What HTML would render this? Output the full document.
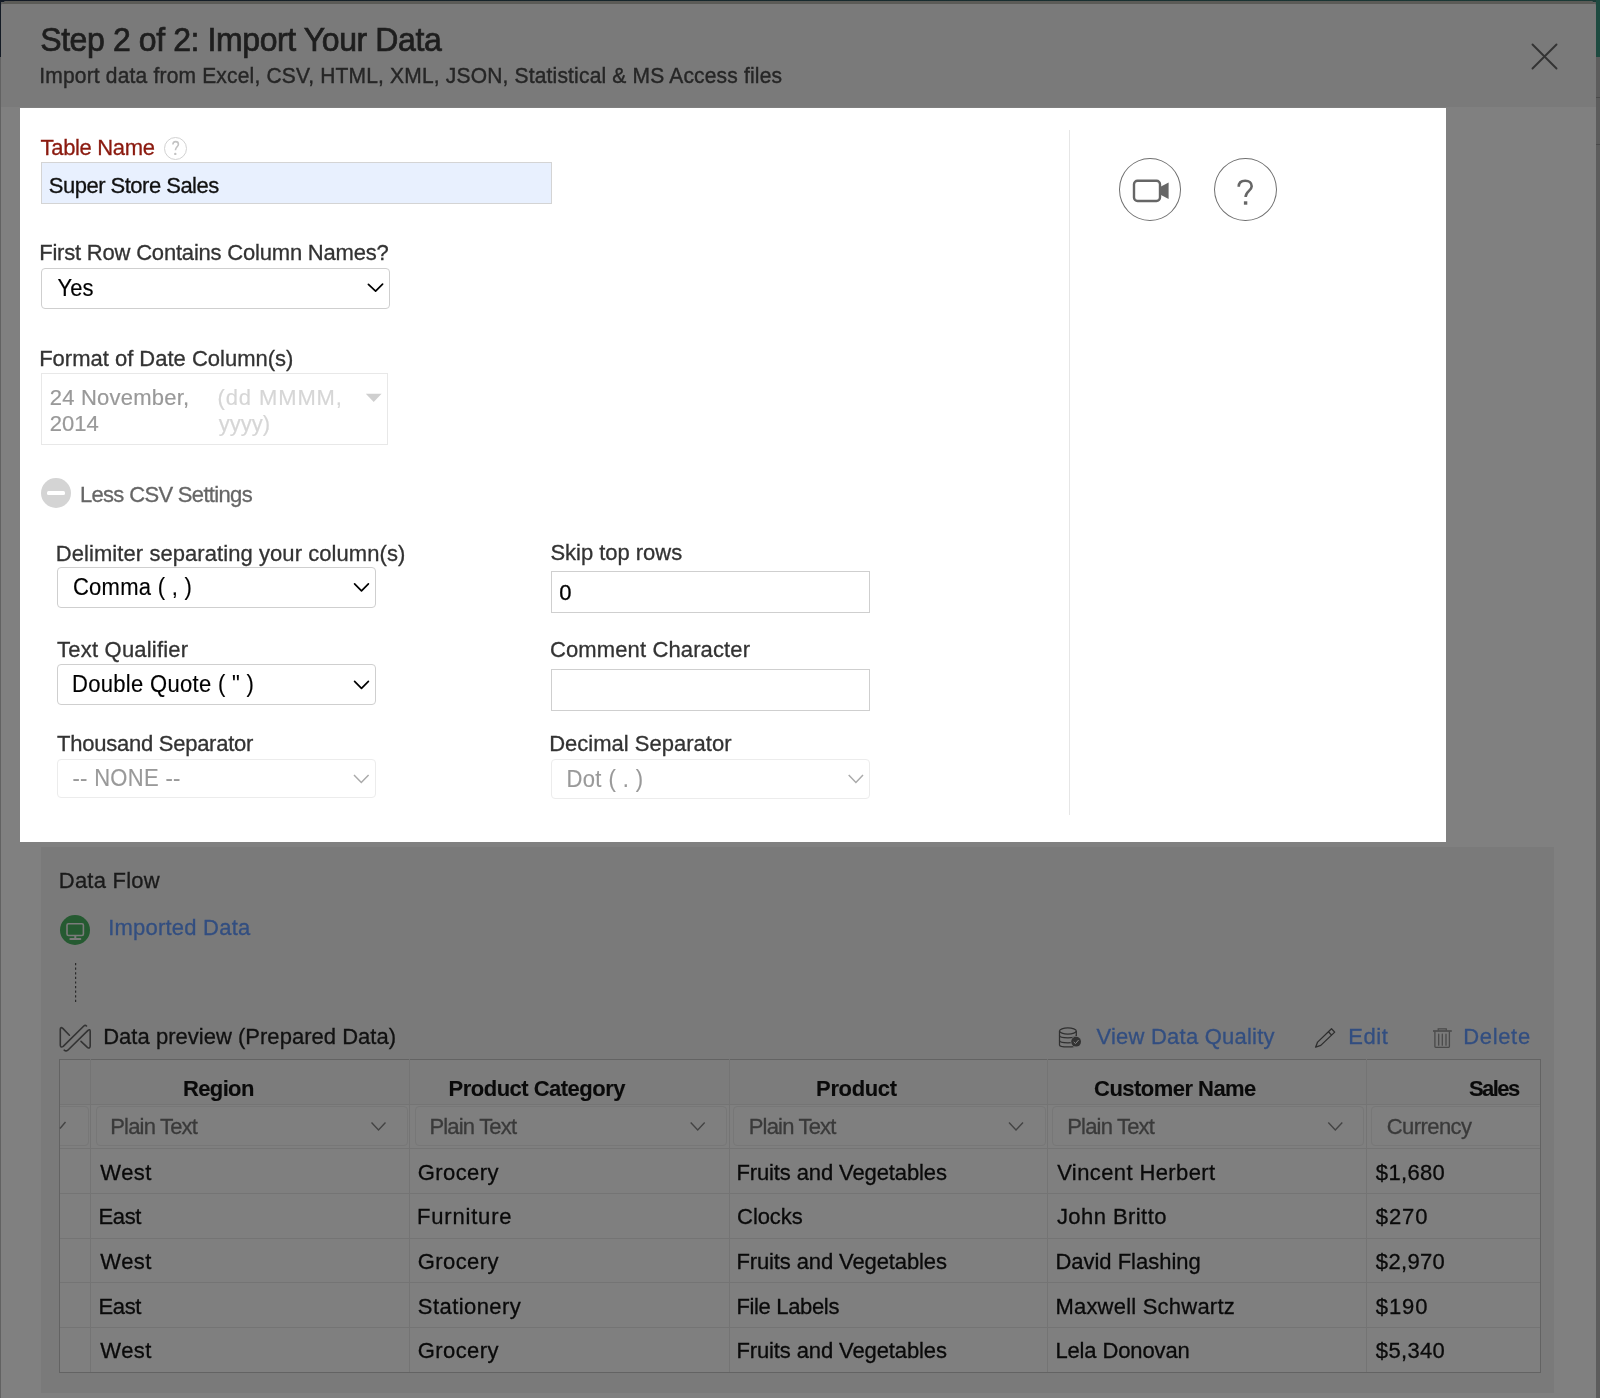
<!DOCTYPE html>
<html><head><meta charset="utf-8">
<style>
html,body{margin:0;padding:0;}
body{width:1600px;height:1398px;overflow:hidden;position:relative;background:#5c5c5c;font-family:"Liberation Sans",sans-serif;}
.a{position:absolute;box-sizing:border-box;}
.t{position:absolute;white-space:pre;line-height:1;font-family:"Liberation Sans",sans-serif;z-index:10;transform-origin:0 0.8465em;}
#txt{position:absolute;left:0;top:0;width:1600px;height:1398px;z-index:10;will-change:transform;}
svg{position:absolute;overflow:visible;}
</style></head><body>
<!-- app background bits -->
<div class="a" style="left:0;top:0;width:1600px;height:2px;background:linear-gradient(90deg,#141b25,#182a2e 50%,#1c3b37)"></div>
<div class="a" style="left:0;top:0;width:1px;height:57px;background:#141b25"></div>
<div class="a" style="left:0;top:57px;width:1px;height:1341px;background:#626262"></div>
<div class="a" style="left:1596px;top:0;width:4px;height:57px;background:#1d4a40"></div>
<div class="a" style="left:1596px;top:97px;width:4px;height:1px;background:#4a4a4a"></div>
<div class="a" style="left:1596px;top:144px;width:4px;height:1px;background:#4a4a4a"></div>

<!-- modal -->
<div class="a" style="left:1px;top:1px;width:1595px;height:1397px;background:#808080;border-radius:6px 6px 0 0;overflow:hidden">
  <div class="a" style="left:0;top:0;width:1595px;height:2.5px;background:#5b5b57"></div>
  <div class="a" style="left:0;top:2.5px;width:1595px;height:103px;background:#7a7a7a"></div>
</div>
<!-- close X -->
<svg style="left:0;top:0" width="1600" height="1398"><path d="M1532.5 44.5 L1556.5 68.5 M1556.5 44.5 L1532.5 68.5" stroke="#333" stroke-width="1.9" stroke-linecap="round" fill="none"/></svg>

<!-- white panel -->
<div class="a" style="left:20px;top:108px;width:1426px;height:734px;background:#fff"></div>
<!-- help circle -->
<div class="a" style="left:163.8px;top:137px;width:23px;height:23px;border:1.5px solid #d2d2d2;border-radius:50%"></div>
<!-- table name input -->
<div class="a" style="left:40.5px;top:162px;width:511.5px;height:42px;background:#e8f0fe;border:1px solid #d4d4d4"></div>
<!-- select yes -->
<div class="a" style="left:40.5px;top:267.6px;width:349.5px;height:41.2px;border:1px solid #cfcfcf;border-radius:4px"></div>
<svg style="left:0;top:0" width="1" height="1"><path d="M368.4 284.3 L375.6 291.2 L382.6 284.2" stroke="#000" stroke-width="1.7" stroke-linecap="round" stroke-linejoin="round" fill="none"/></svg>
<!-- date box -->
<div class="a" style="left:40.5px;top:373px;width:347.5px;height:72px;border:1px solid #e8e8e8"></div>
<svg style="left:0;top:0" width="1" height="1"><path d="M365.8 393.7 L381.6 393.7 L373.7 402 Z" fill="#cfcfcf"/></svg>
<!-- less csv -->
<div class="a" style="left:41px;top:478px;width:30px;height:30px;border-radius:50%;background:#d4d4d4"></div>
<div class="a" style="left:47.2px;top:490.5px;width:17.6px;height:4.8px;background:#fff;border-radius:1.5px"></div>
<!-- selects -->
<div class="a" style="left:57px;top:567.2px;width:319px;height:40.4px;border:1px solid #cfcfcf;border-radius:4px"></div>
<svg style="left:0;top:0" width="1" height="1"><path d="M354.6 583.8 L361.5 590.8 L368.4 583.8" stroke="#000" stroke-width="1.7" stroke-linecap="round" stroke-linejoin="round" fill="none"/></svg>
<div class="a" style="left:57px;top:664.3px;width:319px;height:40.4px;border:1px solid #cfcfcf;border-radius:4px"></div>
<svg style="left:0;top:0" width="1" height="1"><path d="M354.6 681.3 L361.5 688.3 L368.4 681.3" stroke="#000" stroke-width="1.7" stroke-linecap="round" stroke-linejoin="round" fill="none"/></svg>
<div class="a" style="left:57px;top:758.7px;width:318.7px;height:39.8px;border:1px solid #ececec;border-radius:4px"></div>
<svg style="left:0;top:0" width="1" height="1"><path d="M354 775 L361.3 782.5 L368.6 775" stroke="#aaa" stroke-width="1.5" fill="none"/></svg>
<div class="a" style="left:551px;top:571px;width:318.5px;height:41.6px;border:1px solid #cfcfcf"></div>
<div class="a" style="left:551px;top:669.3px;width:318.5px;height:41.4px;border:1px solid #cfcfcf"></div>
<div class="a" style="left:551px;top:758.5px;width:318.5px;height:40.2px;border:1px solid #ececec;border-radius:4px"></div>
<svg style="left:0;top:0" width="1" height="1"><path d="M848.7 775 L855.9 782.5 L863 775" stroke="#aaa" stroke-width="1.5" fill="none"/></svg>
<!-- divider -->
<div class="a" style="left:1069px;top:130px;width:1px;height:685px;background:#e6e6e6"></div>
<!-- circles -->
<div class="a" style="left:1118.8px;top:158.4px;width:62.6px;height:63px;border:1px solid #707070;border-radius:50%"></div>
<div class="a" style="left:1214.4px;top:158.4px;width:62.6px;height:63px;border:1px solid #707070;border-radius:50%"></div>
<svg style="left:0;top:0" width="1" height="1"><rect x="1134" y="180.8" width="26" height="20.2" rx="3.5" stroke="#666" stroke-width="2.4" fill="none"/><path d="M1161 186.5 L1168.6 182.5 L1168.6 199 L1161 195 Z" fill="#666"/></svg>

<!-- data flow box -->
<div class="a" style="left:41px;top:847px;width:1513px;height:546px;background:#7a7a7a"></div>
<div class="a" style="left:60.2px;top:914.9px;width:30.1px;height:30.1px;border-radius:50%;background:#255a31"></div>
<svg style="left:0;top:0" width="1" height="1"><rect x="67" y="923.7" width="16.4" height="11.8" rx="1.5" stroke="#7b7b7b" stroke-width="1.6" fill="none"/><rect x="74.3" y="935.5" width="2" height="3" fill="#7b7b7b"/><rect x="69.3" y="938" width="12" height="2.1" rx="1" fill="#7b7b7b"/></svg>
<svg style="left:0;top:0" width="1" height="1"><path d="M75.6 963 L75.6 1003" stroke="#2a2a2a" stroke-width="1.2" stroke-dasharray="2.2 2.4" fill="none"/></svg>
<!-- data preview icon -->
<svg style="left:0;top:0" width="1" height="1"><g stroke="#333" stroke-width="1.6" fill="none" stroke-linecap="round" stroke-linejoin="round"><path d="M69.4 1035.2 L62.8 1028.4 Q60.4 1026.4 60.3 1029.4 L60.3 1045.2 Q60.5 1048.2 63.2 1046.4 L83.8 1026 Q85.2 1024.8 86.5 1026"/><path d="M64.2 1050.2 Q66 1051.6 67.8 1050.2 L88 1030.4 Q90.2 1028.6 90.2 1031.6 L90.2 1046.2 Q89.8 1049.2 87.4 1047.3 L81 1041.4"/></g></svg>
<!-- db icon -->
<svg style="left:0;top:0" width="1" height="1"><g stroke="#303030" stroke-width="1.25" fill="none"><ellipse cx="1067.9" cy="1031" rx="8.4" ry="3.1"/><path d="M1059.5 1031 V1045 C1059.5 1047.6 1076.3 1047.6 1076.3 1045 V1031"/><path d="M1059.5 1035.6 C1059.5 1038.6 1076.3 1038.6 1076.3 1035.6"/><path d="M1059.5 1040.5 C1059.5 1043.5 1076.3 1043.5 1076.3 1040.5"/></g><circle cx="1076.1" cy="1041.7" r="5.6" fill="#7a7a7a"/><circle cx="1076.1" cy="1041.7" r="4.9" fill="#333"/><path d="M1073.7 1041.9 L1075.5 1043.6 L1078.6 1040" stroke="#888" stroke-width="1" fill="none"/></svg>
<!-- pencil -->
<svg style="left:0;top:0" width="1" height="1"><g stroke="#2e2e2e" stroke-width="1.3" fill="none" stroke-linejoin="round"><path d="M1315.6 1047.2 L1317.6 1042.1 L1331.5 1028.7 L1334.7 1032.1 L1320.8 1045.4 Z"/><path d="M1328.4 1031.7 L1331.6 1035.1"/></g></svg>
<!-- trash -->
<svg style="left:0;top:0" width="1" height="1"><g stroke="#4a4a4a" fill="none"><path d="M1433 1031 H1451.8" stroke-width="1.6"/><path d="M1438.2 1030.6 V1028.9 H1446.3 V1030.6" stroke-width="1.2"/><path d="M1434.9 1031.5 V1046.6 Q1434.9 1047.3 1435.6 1047.3 H1448.7 Q1449.4 1047.3 1449.4 1046.6 V1031.5" stroke-width="1.3"/><path d="M1438.7 1034.2 V1045.2 M1442.3 1034.2 V1045.2 M1446 1034.2 V1045.2" stroke-width="1.3" stroke-linecap="round"/></g></svg>
<!-- table -->
<div class="a" style="left:59px;top:1058.5px;width:1481.5px;height:314px;border:1px solid #636363;background:#7f7f7f"></div>
<!-- header / select row lines -->
<div class="a" style="left:60px;top:1059.5px;width:1480px;height:44.5px;background:#7c7c7c"></div>
<div class="a" style="left:60px;top:1104px;width:1480px;height:1px;background:#747474"></div>
<div class="a" style="left:60px;top:1148px;width:1480px;height:1px;background:#747474"></div>
<div class="a" style="left:60px;top:1193px;width:1480px;height:1px;background:#747474"></div>
<div class="a" style="left:60px;top:1238px;width:1480px;height:1px;background:#747474"></div>
<div class="a" style="left:60px;top:1282px;width:1480px;height:1px;background:#747474"></div>
<div class="a" style="left:60px;top:1327px;width:1480px;height:1px;background:#747474"></div>
<div class="a" style="left:90px;top:1059px;width:1px;height:313px;background:#747474"></div>
<div class="a" style="left:409px;top:1059px;width:1px;height:313px;background:#747474"></div>
<div class="a" style="left:728.5px;top:1059px;width:1px;height:313px;background:#747474"></div>
<div class="a" style="left:1047px;top:1059px;width:1px;height:313px;background:#747474"></div>
<div class="a" style="left:1366px;top:1059px;width:1px;height:313px;background:#747474"></div>
<!-- table selects -->
<div class="a" style="left:50px;top:1106px;width:38.7px;height:39.5px;border:1px solid #777;border-radius:4px;clip-path:inset(-2px -2px -2px 10px)"></div>
<svg style="left:0;top:0" width="1" height="1"><path d="M60 1128.5 L65.5 1122" stroke="#444" stroke-width="1.4" fill="none"/></svg>
<div class="a" style="left:95.5px;top:1106px;width:312px;height:39.5px;border:1px solid #777;border-radius:4px"></div>
<div class="a" style="left:414.7px;top:1106px;width:312px;height:39.5px;border:1px solid #777;border-radius:4px"></div>
<div class="a" style="left:733px;top:1106px;width:312.5px;height:39.5px;border:1px solid #777;border-radius:4px"></div>
<div class="a" style="left:1052.3px;top:1106px;width:312px;height:39.5px;border:1px solid #777;border-radius:4px"></div>
<div class="a" style="left:1370.5px;top:1106px;width:175px;height:39.5px;border:1px solid #777;border-radius:4px;clip-path:inset(-2px 6px -2px -2px)"></div>
<svg style="left:0;top:0" width="1" height="1"><g stroke="#444" stroke-width="1.4" fill="none"><path d="M371.5 1122.5 L378.5 1130 L385.5 1122.5"/><path d="M690.7 1122.5 L697.7 1130 L704.7 1122.5"/><path d="M1009 1122.5 L1016 1130 L1023 1122.5"/><path d="M1328.3 1122.5 L1335.3 1130 L1342.3 1122.5"/></g></svg>

<div id="txt">
<div class="t" style="left:40.20px;top:24px;font-size:32px;letter-spacing:-0.399px;color:#1e1e1e;font-weight:400;-webkit-text-stroke:0.7px #1e1e1e;transform:scaleY(1.06);transform-origin:0 27px;">Step 2 of 2: Import Your Data</div>
<div class="t" style="left:39.30px;top:65px;font-size:21px;letter-spacing:0.175px;color:#262626;font-weight:400;-webkit-text-stroke:0.4px #262626;transform:scaleY(1.07);transform-origin:0 18px;">Import data from Excel, CSV, HTML, XML, JSON, Statistical &amp; MS Access files</div>
<div class="t" style="left:40.60px;top:137px;font-size:22px;letter-spacing:-0.339px;color:#8b1a0f;font-weight:400;-webkit-text-stroke:0.3px #8b1a0f;transform:scaleY(1.04);transform-origin:0 18px;">Table Name</div>
<div class="t" style="left:48.85px;top:175px;font-size:22px;letter-spacing:-0.512px;color:#111;font-weight:400;-webkit-text-stroke:0.3px #111;transform:scaleY(1.04);transform-origin:0 18px;">Super Store Sales</div>
<div class="t" style="left:39.20px;top:242px;font-size:22px;letter-spacing:-0.201px;color:#333;font-weight:400;-webkit-text-stroke:0.3px #333;transform:scaleY(1.04);transform-origin:0 18px;">First Row Contains Column Names?</div>
<div class="t" style="left:57.40px;top:278px;font-size:22px;letter-spacing:0.105px;color:#000;font-weight:400;-webkit-text-stroke:0.15px #000;transform:scaleY(1.09);transform-origin:0 18px;">Yes</div>
<div class="t" style="left:39.20px;top:348px;font-size:22px;letter-spacing:-0.007px;color:#333;font-weight:400;-webkit-text-stroke:0.3px #333;transform:scaleY(1.04);transform-origin:0 18px;">Format of Date Column(s)</div>
<div class="t" style="left:49.70px;top:387px;font-size:22px;letter-spacing:0.232px;color:#999;font-weight:400;-webkit-text-stroke:0.2px #999;transform:scaleY(1.04);transform-origin:0 18px;">24 November,</div>
<div class="t" style="left:49.70px;top:413px;font-size:22px;letter-spacing:0.000px;color:#999;font-weight:400;-webkit-text-stroke:0.2px #999;transform:scaleY(1.04);transform-origin:0 18px;">2014</div>
<div class="t" style="left:217.50px;top:387px;font-size:22px;letter-spacing:0.886px;color:#d6d6d6;font-weight:400;-webkit-text-stroke:0.2px #d6d6d6;transform:scaleY(1.04);transform-origin:0 18px;">(dd MMMM,</div>
<div class="t" style="left:218.80px;top:413px;font-size:22px;letter-spacing:0.000px;color:#d6d6d6;font-weight:400;-webkit-text-stroke:0.2px #d6d6d6;transform:scaleY(1.04);transform-origin:0 18px;">yyyy)</div>
<div class="t" style="left:79.90px;top:484px;font-size:22px;letter-spacing:-0.664px;color:#666;font-weight:400;-webkit-text-stroke:0.3px #666;transform:scaleY(1.04);transform-origin:0 18px;">Less CSV Settings</div>
<div class="t" style="left:55.80px;top:543px;font-size:22px;letter-spacing:0.068px;color:#333;font-weight:400;-webkit-text-stroke:0.3px #333;transform:scaleY(1.04);transform-origin:0 18px;">Delimiter separating your column(s)</div>
<div class="t" style="left:72.90px;top:577px;font-size:22px;letter-spacing:0.291px;color:#000;font-weight:400;-webkit-text-stroke:0.15px #000;transform:scaleY(1.09);transform-origin:0 18px;">Comma ( , )</div>
<div class="t" style="left:550.40px;top:542px;font-size:22px;letter-spacing:-0.021px;color:#333;font-weight:400;-webkit-text-stroke:0.3px #333;transform:scaleY(1.04);transform-origin:0 18px;">Skip top rows</div>
<div class="t" style="left:559.20px;top:582px;font-size:22px;letter-spacing:0.000px;color:#000;font-weight:400;-webkit-text-stroke:0.3px #000;transform:scaleY(1.04);transform-origin:0 18px;">0</div>
<div class="t" style="left:57.10px;top:639px;font-size:22px;letter-spacing:0.204px;color:#333;font-weight:400;-webkit-text-stroke:0.3px #333;transform:scaleY(1.04);transform-origin:0 18px;">Text Qualifier</div>
<div class="t" style="left:71.95px;top:674px;font-size:22px;letter-spacing:0.319px;color:#000;font-weight:400;-webkit-text-stroke:0.15px #000;transform:scaleY(1.09);transform-origin:0 18px;">Double Quote ( " )</div>
<div class="t" style="left:549.90px;top:639px;font-size:22px;letter-spacing:0.129px;color:#333;font-weight:400;-webkit-text-stroke:0.3px #333;transform:scaleY(1.04);transform-origin:0 18px;">Comment Character</div>
<div class="t" style="left:57.10px;top:733px;font-size:22px;letter-spacing:-0.256px;color:#333;font-weight:400;-webkit-text-stroke:0.3px #333;transform:scaleY(1.04);transform-origin:0 18px;">Thousand Separator</div>
<div class="t" style="left:72.40px;top:768px;font-size:22px;letter-spacing:0.326px;color:#999;font-weight:400;-webkit-text-stroke:0.15px #999;transform:scaleY(1.09);transform-origin:0 18px;">-- NONE --</div>
<div class="t" style="left:549.20px;top:733px;font-size:22px;letter-spacing:0.009px;color:#333;font-weight:400;-webkit-text-stroke:0.3px #333;transform:scaleY(1.04);transform-origin:0 18px;">Decimal Separator</div>
<div class="t" style="left:566.40px;top:769px;font-size:22px;letter-spacing:0.411px;color:#999;font-weight:400;-webkit-text-stroke:0.15px #999;transform:scaleY(1.09);transform-origin:0 18px;">Dot ( . )</div>
<div class="t" style="left:58.80px;top:870px;font-size:22px;letter-spacing:0.219px;color:#1a1a1a;font-weight:400;-webkit-text-stroke:0.3px #1a1a1a;transform:scaleY(1.04);transform-origin:0 18px;">Data Flow</div>
<div class="t" style="left:108.20px;top:917px;font-size:22px;letter-spacing:0.219px;color:#324e80;font-weight:400;-webkit-text-stroke:0.3px #324e80;transform:scaleY(1.04);transform-origin:0 18px;">Imported Data</div>
<div class="t" style="left:103.20px;top:1026px;font-size:22px;letter-spacing:0.022px;color:#111;font-weight:400;-webkit-text-stroke:0.3px #111;transform:scaleY(1.04);transform-origin:0 18px;">Data preview (Prepared Data)</div>
<div class="t" style="left:1096.50px;top:1026px;font-size:22px;letter-spacing:0.222px;color:#324e80;font-weight:400;-webkit-text-stroke:0.3px #324e80;transform:scaleY(1.04);transform-origin:0 18px;">View Data Quality</div>
<div class="t" style="left:1348.20px;top:1026px;font-size:22px;letter-spacing:0.568px;color:#324e80;font-weight:400;-webkit-text-stroke:0.3px #324e80;transform:scaleY(1.04);transform-origin:0 18px;">Edit</div>
<div class="t" style="left:1463.20px;top:1026px;font-size:22px;letter-spacing:0.668px;color:#324e80;font-weight:400;-webkit-text-stroke:0.3px #324e80;transform:scaleY(1.04);transform-origin:0 18px;">Delete</div>
<div class="t" style="left:183.00px;top:1078px;font-size:22px;letter-spacing:-0.642px;color:#0a0a0a;font-weight:700;-webkit-text-stroke:0.1px #0a0a0a;transform:scaleY(1.04);transform-origin:0 18px;">Region</div>
<div class="t" style="left:448.60px;top:1078px;font-size:22px;letter-spacing:-0.517px;color:#0a0a0a;font-weight:700;-webkit-text-stroke:0.1px #0a0a0a;transform:scaleY(1.04);transform-origin:0 18px;">Product Category</div>
<div class="t" style="left:816.10px;top:1078px;font-size:22px;letter-spacing:-0.373px;color:#0a0a0a;font-weight:700;-webkit-text-stroke:0.1px #0a0a0a;transform:scaleY(1.04);transform-origin:0 18px;">Product</div>
<div class="t" style="left:1094.10px;top:1078px;font-size:22px;letter-spacing:-0.540px;color:#0a0a0a;font-weight:700;-webkit-text-stroke:0.1px #0a0a0a;transform:scaleY(1.04);transform-origin:0 18px;">Customer Name</div>
<div class="t" style="left:1468.90px;top:1078px;font-size:22px;letter-spacing:-1.514px;color:#0a0a0a;font-weight:700;-webkit-text-stroke:0.1px #0a0a0a;transform:scaleY(1.04);transform-origin:0 18px;">Sales</div>
<div class="t" style="left:110.20px;top:1116px;font-size:22px;letter-spacing:-0.808px;color:#3a3a3a;font-weight:400;-webkit-text-stroke:0.3px #3a3a3a;transform:scaleY(1.04);transform-origin:0 18px;">Plain Text</div>
<div class="t" style="left:429.40px;top:1116px;font-size:22px;letter-spacing:-0.808px;color:#3a3a3a;font-weight:400;-webkit-text-stroke:0.3px #3a3a3a;transform:scaleY(1.04);transform-origin:0 18px;">Plain Text</div>
<div class="t" style="left:748.70px;top:1116px;font-size:22px;letter-spacing:-0.808px;color:#3a3a3a;font-weight:400;-webkit-text-stroke:0.3px #3a3a3a;transform:scaleY(1.04);transform-origin:0 18px;">Plain Text</div>
<div class="t" style="left:1067.20px;top:1116px;font-size:22px;letter-spacing:-0.808px;color:#3a3a3a;font-weight:400;-webkit-text-stroke:0.3px #3a3a3a;transform:scaleY(1.04);transform-origin:0 18px;">Plain Text</div>
<div class="t" style="left:1386.80px;top:1116px;font-size:22px;letter-spacing:-0.578px;color:#3a3a3a;font-weight:400;-webkit-text-stroke:0.3px #3a3a3a;transform:scaleY(1.04);transform-origin:0 18px;">Currency</div>
<div class="t" style="left:100.30px;top:1162px;font-size:22px;letter-spacing:0.466px;color:#0a0a0a;font-weight:400;-webkit-text-stroke:0.3px #0a0a0a;transform:scaleY(1.04);transform-origin:0 18px;">West</div>
<div class="t" style="left:417.65px;top:1162px;font-size:22px;letter-spacing:0.452px;color:#0a0a0a;font-weight:400;-webkit-text-stroke:0.3px #0a0a0a;transform:scaleY(1.04);transform-origin:0 18px;">Grocery</div>
<div class="t" style="left:736.40px;top:1162px;font-size:22px;letter-spacing:-0.110px;color:#0a0a0a;font-weight:400;-webkit-text-stroke:0.3px #0a0a0a;transform:scaleY(1.04);transform-origin:0 18px;">Fruits and Vegetables</div>
<div class="t" style="left:1057.20px;top:1162px;font-size:22px;letter-spacing:0.390px;color:#0a0a0a;font-weight:400;-webkit-text-stroke:0.3px #0a0a0a;transform:scaleY(1.04);transform-origin:0 18px;">Vincent Herbert</div>
<div class="t" style="left:1375.80px;top:1162px;font-size:22px;letter-spacing:0.349px;color:#0a0a0a;font-weight:400;-webkit-text-stroke:0.3px #0a0a0a;transform:scaleY(1.04);transform-origin:0 18px;">$1,680</div>
<div class="t" style="left:98.50px;top:1206px;font-size:22px;letter-spacing:-0.370px;color:#0a0a0a;font-weight:400;-webkit-text-stroke:0.3px #0a0a0a;transform:scaleY(1.04);transform-origin:0 18px;">East</div>
<div class="t" style="left:416.95px;top:1206px;font-size:22px;letter-spacing:0.819px;color:#0a0a0a;font-weight:400;-webkit-text-stroke:0.3px #0a0a0a;transform:scaleY(1.04);transform-origin:0 18px;">Furniture</div>
<div class="t" style="left:737.10px;top:1206px;font-size:22px;letter-spacing:-0.082px;color:#0a0a0a;font-weight:400;-webkit-text-stroke:0.3px #0a0a0a;transform:scaleY(1.04);transform-origin:0 18px;">Clocks</div>
<div class="t" style="left:1056.90px;top:1206px;font-size:22px;letter-spacing:0.437px;color:#0a0a0a;font-weight:400;-webkit-text-stroke:0.3px #0a0a0a;transform:scaleY(1.04);transform-origin:0 18px;">John Britto</div>
<div class="t" style="left:1375.80px;top:1206px;font-size:22px;letter-spacing:0.898px;color:#0a0a0a;font-weight:400;-webkit-text-stroke:0.3px #0a0a0a;transform:scaleY(1.04);transform-origin:0 18px;">$270</div>
<div class="t" style="left:100.30px;top:1251px;font-size:22px;letter-spacing:0.466px;color:#0a0a0a;font-weight:400;-webkit-text-stroke:0.3px #0a0a0a;transform:scaleY(1.04);transform-origin:0 18px;">West</div>
<div class="t" style="left:417.65px;top:1251px;font-size:22px;letter-spacing:0.452px;color:#0a0a0a;font-weight:400;-webkit-text-stroke:0.3px #0a0a0a;transform:scaleY(1.04);transform-origin:0 18px;">Grocery</div>
<div class="t" style="left:736.40px;top:1251px;font-size:22px;letter-spacing:-0.110px;color:#0a0a0a;font-weight:400;-webkit-text-stroke:0.3px #0a0a0a;transform:scaleY(1.04);transform-origin:0 18px;">Fruits and Vegetables</div>
<div class="t" style="left:1055.40px;top:1251px;font-size:22px;letter-spacing:-0.014px;color:#0a0a0a;font-weight:400;-webkit-text-stroke:0.3px #0a0a0a;transform:scaleY(1.04);transform-origin:0 18px;">David Flashing</div>
<div class="t" style="left:1375.80px;top:1251px;font-size:22px;letter-spacing:0.349px;color:#0a0a0a;font-weight:400;-webkit-text-stroke:0.3px #0a0a0a;transform:scaleY(1.04);transform-origin:0 18px;">$2,970</div>
<div class="t" style="left:98.50px;top:1296px;font-size:22px;letter-spacing:-0.370px;color:#0a0a0a;font-weight:400;-webkit-text-stroke:0.3px #0a0a0a;transform:scaleY(1.04);transform-origin:0 18px;">East</div>
<div class="t" style="left:417.85px;top:1296px;font-size:22px;letter-spacing:0.422px;color:#0a0a0a;font-weight:400;-webkit-text-stroke:0.3px #0a0a0a;transform:scaleY(1.04);transform-origin:0 18px;">Stationery</div>
<div class="t" style="left:736.40px;top:1296px;font-size:22px;letter-spacing:-0.339px;color:#0a0a0a;font-weight:400;-webkit-text-stroke:0.3px #0a0a0a;transform:scaleY(1.04);transform-origin:0 18px;">File Labels</div>
<div class="t" style="left:1055.40px;top:1296px;font-size:22px;letter-spacing:0.220px;color:#0a0a0a;font-weight:400;-webkit-text-stroke:0.3px #0a0a0a;transform:scaleY(1.04);transform-origin:0 18px;">Maxwell Schwartz</div>
<div class="t" style="left:1375.80px;top:1296px;font-size:22px;letter-spacing:0.898px;color:#0a0a0a;font-weight:400;-webkit-text-stroke:0.3px #0a0a0a;transform:scaleY(1.04);transform-origin:0 18px;">$190</div>
<div class="t" style="left:100.30px;top:1340px;font-size:22px;letter-spacing:0.466px;color:#0a0a0a;font-weight:400;-webkit-text-stroke:0.3px #0a0a0a;transform:scaleY(1.04);transform-origin:0 18px;">West</div>
<div class="t" style="left:417.65px;top:1340px;font-size:22px;letter-spacing:0.452px;color:#0a0a0a;font-weight:400;-webkit-text-stroke:0.3px #0a0a0a;transform:scaleY(1.04);transform-origin:0 18px;">Grocery</div>
<div class="t" style="left:736.40px;top:1340px;font-size:22px;letter-spacing:-0.110px;color:#0a0a0a;font-weight:400;-webkit-text-stroke:0.3px #0a0a0a;transform:scaleY(1.04);transform-origin:0 18px;">Fruits and Vegetables</div>
<div class="t" style="left:1055.40px;top:1340px;font-size:22px;letter-spacing:-0.130px;color:#0a0a0a;font-weight:400;-webkit-text-stroke:0.3px #0a0a0a;transform:scaleY(1.04);transform-origin:0 18px;">Lela Donovan</div>
<div class="t" style="left:1375.80px;top:1340px;font-size:22px;letter-spacing:0.349px;color:#0a0a0a;font-weight:400;-webkit-text-stroke:0.3px #0a0a0a;transform:scaleY(1.04);transform-origin:0 18px;">$5,340</div>
<svg style="left:0;top:0" width="1" height="1"><path d="M172.9 144.6 C172.9 142.4 174.2 141.6 175.6 141.6 C177.3 141.6 178.4 142.7 178.4 144.2 C178.4 146.6 175.4 147 175.4 150.3" stroke="#c2c2c2" stroke-width="1.6" fill="none"/><circle cx="175.3" cy="153.9" r="1.2" fill="#c2c2c2"/></svg>
<svg style="left:0;top:0" width="1" height="1"><path d="M1238.7 186.8 C1238.7 182.6 1241.6 180.7 1245.2 180.7 C1249.2 180.7 1251.7 183.1 1251.7 186.3 C1251.7 190.6 1245.6 191.4 1245.6 197" stroke="#666" stroke-width="2.6" fill="none"/><rect x="1243.9" y="201.3" width="3.4" height="3.4" fill="#666"/></svg>
</div>
</body></html>
